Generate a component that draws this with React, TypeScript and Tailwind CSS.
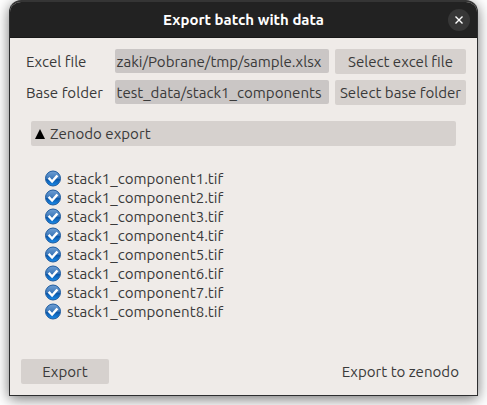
import React from "react";

const files = [1, 2, 3, 4, 5, 6, 7, 8].map((n) => `stack1_component${n}.tif`);

function CheckIcon() {
  return (
    <svg width="18" height="18" viewBox="0 0 18 18" className="block shrink-0">
      <defs>
        <linearGradient id="ball" x1="0" y1="0" x2="0" y2="1">
          <stop offset="0" stopColor="#6f9fd4" />
          <stop offset="0.48" stopColor="#3f7abb" />
          <stop offset="0.56" stopColor="#0b57a8" />
          <stop offset="1" stopColor="#1a8cec" />
        </linearGradient>
      </defs>
      <circle cx="9" cy="8.5" r="7.5" fill="url(#ball)" stroke="#1f5c9f" strokeWidth="1" />
      <path d="M4.6 7.9l3.5 3.6 5.3-6" fill="none" stroke="#fff" strokeWidth="2.5" />
    </svg>
  );
}

function Field({ children }: { children: string }) {
  return (
    <div className="flex h-6 w-[214px] items-center overflow-hidden rounded-[2px] bg-[#cac6c5] pt-px pl-[1.5px]">
      {children}
    </div>
  );
}

function Button({ children, className = "" }: { children: string; className?: string }) {
  return (
    <button className={`flex h-[25px] items-center justify-center rounded-[2px] bg-[#d6d1ce] ${className}`}>
      {children}
    </button>
  );
}

export default function App() {
  return (
    <div className="h-[405px] w-[487px] overflow-hidden bg-white pl-[9px] font-['Ubuntu','Noto_Sans',sans-serif] text-[15.08px] leading-5 whitespace-nowrap text-[#3a3a3a]">
      <div className="flex h-[396px] w-[469px] flex-col overflow-hidden rounded-t-[12px] border border-t-2 border-[#2d2e2f] border-t-[#353535] bg-[#efebe8] shadow-[0_3px_14px_rgba(0,0,0,0.55)]">
        <header className="grid h-9 shrink-0 grid-cols-[1fr_auto_1fr] items-center border-b border-[#181818] bg-[#222] text-white">
          <span />
          <h1 className="text-[15px] font-bold">Export batch with data</h1>
          <button className="mr-[7px] flex size-[22px] items-center justify-center justify-self-end rounded-full bg-[#373737]">
            <svg width="8" height="8" viewBox="0 0 8 8">
              <path d="M0.5 0.5l7 7M7.5 0.5l-7 7" stroke="#fff" strokeWidth="1.4" />
            </svg>
          </button>
        </header>
        <main className="flex flex-1 flex-col">
          <div className="mt-[11px] grid grid-cols-[83px_214px_131px] gap-x-[6px] gap-y-[6px] pl-4">
            <span className="pt-[3px]">Excel file</span>
            <Field>zaki/Pobrane/tmp/sample.xlsx</Field>
            <Button>Select excel file</Button>
            <span className="pt-[3px]">Base folder</span>
            <Field>test_data/stack1_components</Field>
            <Button>Select base folder</Button>
          </div>
          <button className="mt-4 ml-[21px] flex h-[25px] w-[425px] items-center gap-[5px] rounded-[2px] bg-[#d6d1ce] pl-1">
            <svg width="10" height="10" viewBox="0 0 10 10">
              <path d="M5 0L10 10H0z" fill="#000" />
            </svg>
            <span>Zenodo export</span>
          </button>
          <ul className="mt-[23px] ml-[34px]">
            {files.map((f) => (
              <li key={f} className="flex h-[19px] items-center gap-[5px]">
                <CheckIcon />
                <span>{f}</span>
              </li>
            ))}
          </ul>
          <footer className="mt-auto mb-[11px] flex items-center justify-between pr-[18px] pl-[11px]">
            <Button className="w-[88px]">Export</Button>
            <span>Export to zenodo</span>
          </footer>
        </main>
      </div>
    </div>
  );
}
